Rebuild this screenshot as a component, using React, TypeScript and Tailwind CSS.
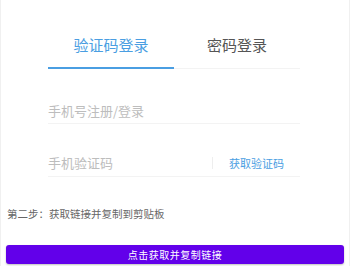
import React from "react";

export default function App() {
  return (
    <div
      className="w-[350px] h-[266px] bg-white border-x border-[#f0f0f0] overflow-hidden"
      style={{ fontFamily: '"Noto Sans CJK SC", "Noto Sans", sans-serif' }}
    >
      <div className="ml-[47px] w-[252px]">
        <div className="mt-[31px] flex border-b border-[#f3f3f3]">
          <div className="flex-1 h-[38px] -mb-px flex justify-center items-start pt-[3px] border-b-2 border-[#4a9ee2]">
            <span className="text-[15px] leading-[22px] text-[#4a9ee2]">验证码登录</span>
          </div>
          <div className="flex-1 h-[38px] -mb-px flex justify-center items-start pt-[3px]">
            <span className="text-[15px] leading-[22px] text-[#555555]">密码登录</span>
          </div>
        </div>
        <div className="pt-[33px] pb-[3px] border-b border-[#f3f3f3] flex">
          <input
            className="flex-1 min-w-0 outline-none text-[13px] leading-[18px] h-[18px] text-[#333] placeholder:text-[#bdbdbd] bg-transparent p-0"
            placeholder="手机号注册/登录"
          />
        </div>
        <div className="pt-[30px] pb-[4px] border-b border-[#f3f3f3] flex items-center">
          <input
            className="flex-1 min-w-0 outline-none text-[13px] leading-[18px] h-[18px] text-[#333] placeholder:text-[#bdbdbd] bg-transparent p-0"
            placeholder="手机验证码"
          />
          <div className="border-l border-[#eeeeee] h-[12px] pl-[16px] pr-[16px] flex items-center">
            <span className="text-[11px] leading-[12px] text-[#4a9ee2] whitespace-nowrap">获取验证码</span>
          </div>
        </div>
      </div>
      <div className="mt-[30px] pl-[6px] text-[10.5px] leading-[14px] text-[#666666]">
        第二步：获取链接并复制到剪贴板
      </div>
      <div className="mx-[5px] mt-[19px]">
        <button className="w-full h-[19px] rounded-[3px] bg-[#6200ea] text-white text-[10px] leading-[19px] tracking-[0.5px] shadow-[0_1px_2px_rgba(0,0,0,0.25)]">
          点击获取并复制链接
        </button>
      </div>
    </div>
  );
}
